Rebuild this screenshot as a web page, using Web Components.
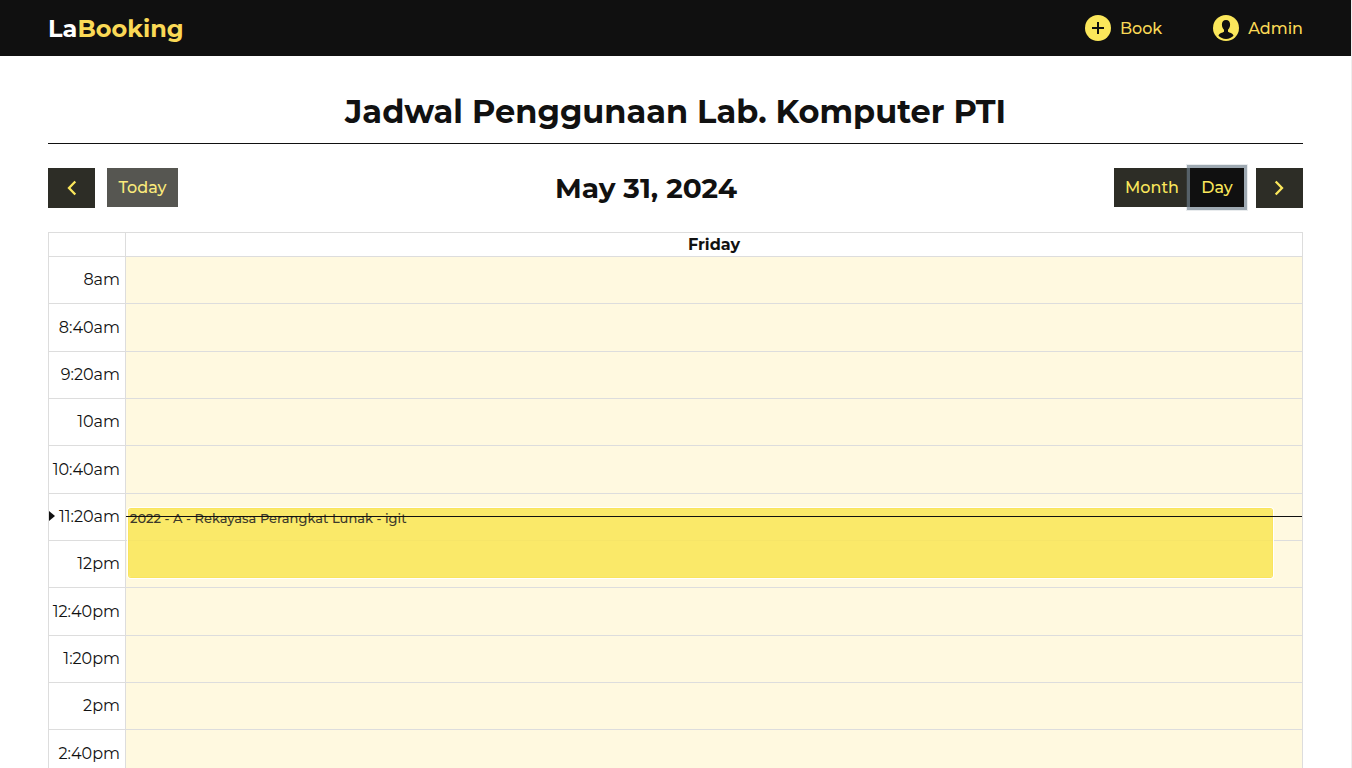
<!DOCTYPE html>
<html lang="id">
<head>
<meta charset="utf-8">
<meta name="viewport" content="width=device-width, initial-scale=1">
<title>LaBooking</title>
<style>
  html { background: #fff; }
  body {
    margin: 0;
    border-right: 1px solid #eee;
    font-family: Montserrat, Inter, "Open Sans", sans-serif;
    font-size: 16px;
    line-height: 24px;
    color: #111;
    --ink: #101010;
    --button: #2d2d26;
    --yellow: #fbe75b;
    --gold: #fad956;
    --line: #ddd;
  }
</style>
</head>
<body>
<booking-app></booking-app>
<script>
const define = (name, markup, setup) => {
  const template = document.createElement('template');
  template.innerHTML = markup;
  customElements.define(name, class extends HTMLElement {
    constructor() {
      super();
      this.attachShadow({ mode: 'open' }).append(template.content.cloneNode(true));
    }
    connectedCallback() { if (setup) setup(this, this.shadowRoot); }
  });
};

define('nav-link', `
  <style>
    :host { display: block; }
    a { display: flex; align-items: center; gap: 9px; color: var(--gold); text-decoration: none; font-weight: 500; }
    .label { padding-top: 2px; }
    ::slotted(svg) { display: block; width: 26px; height: 26px; }
  </style>
  <a href="#"><slot name="icon"></slot><span class="label"><slot></slot></span></a>`,
  (host, root) => { root.querySelector('a').href = host.getAttribute('href'); });

define('site-header', `
  <style>
    :host { display: block; background: var(--ink); }
    header { display: flex; align-items: center; justify-content: space-between; height: 56px; padding: 0 48px; }
    .brand { padding-top: 2px; color: #fff; font-size: 24px; font-weight: 700; text-decoration: none; }
    .brand span { color: var(--gold); }
    nav { display: flex; gap: 51px; }
  </style>
  <header>
    <a class="brand" href="#home">La<span>Booking</span></a>
    <nav>
      <nav-link href="#book">
        <svg slot="icon" viewBox="0 0 26 26" aria-hidden="true">
          <circle cx="13" cy="13" r="13" fill="#fbe75b"/>
          <path d="M13 7v12M7 13h12" stroke="#101010" stroke-width="2"/>
        </svg>Book</nav-link>
      <nav-link href="#admin">
        <svg slot="icon" viewBox="0 0 26 26" aria-hidden="true">
          <circle cx="13" cy="13" r="13" fill="#fbe75b"/>
          <path d="M13 5c-2.700 0-4.100 1.900-4.100 4.500 0 2.400.9 4.200 2.100 5.200v2.100c-1.300 1-4.800 1.200-5.500 4C7.300 22.800 10 24 13 24s5.700-1.200 7.500-3.200c-.7-2.800-4.200-3-5.500-4v-2.100c1.200-1 2.100-2.800 2.100-5.200C17.100 6.900 15.700 5 13 5z" fill="#101010"/>
        </svg>Admin</nav-link>
    </nav>
  </header>`);

define('calendar-toolbar', `
  <style>
    :host { display: block; }
    .bar { display: flex; align-items: flex-start; justify-content: space-between; height: 40px; }
    .side { display: flex; align-items: flex-start; gap: 12px; }
    .views { display: flex; }
    button {
      box-sizing: border-box; display: flex; align-items: center; justify-content: center;
      height: 39px; margin: 0; padding: 0; border: 0; border-radius: 0;
      background: var(--button); color: var(--yellow); font: inherit; font-weight: 500;
    }
    .step { width: 47px; height: 40px; }
    .today { width: 71px; }
    .today:disabled { opacity: .8; }
    .month { width: 76px; }
    .day { width: 54px; position: relative; background: var(--ink); box-shadow: 0 0 0 3px rgba(108, 125, 138, .6), 0 0 0 4px rgba(108, 125, 138, .15); }
    h2 { margin: 0; font-size: 28px; line-height: 40px; font-weight: 700; }
    svg { display: block; width: 16px; height: 16px; fill: none; stroke: currentColor; stroke-width: 2.3; }
  </style>
  <div class="bar">
    <div class="side">
      <button class="step" type="button" aria-label="Previous"><svg viewBox="0 0 16 16"><path d="M11.300 1.500 5 8l6.300 6.500"/></svg></button>
      <button class="today" type="button" disabled>Today</button>
    </div>
    <h2><slot></slot></h2>
    <div class="side">
      <div class="views">
        <button class="month" type="button">Month</button>
        <button class="day" type="button" aria-pressed="true">Day</button>
      </div>
      <button class="step" type="button" aria-label="Next"><svg viewBox="0 0 16 16"><path d="M4.700 1.500 11 8l-6.300 6.500"/></svg></button>
    </div>
  </div>`);

define('calendar-event', `
  <style>
    :host {
      box-sizing: border-box; display: block; padding: 0 1px;
      border: 1px solid rgba(250, 225, 80, .9); border-radius: 3px;
      background: rgba(249, 230, 88, .88); background-clip: padding-box;
      box-shadow: 0 0 0 1px #fff; color: #3d3a2b;
      font-size: 13px; line-height: 18px; font-weight: 500;
    }
  </style>
  <slot></slot>`);

define('day-grid', `
  <style>
    :host { display: block; }
    table { width: 100%; border-collapse: collapse; table-layout: fixed; }
    th, td { box-sizing: border-box; padding: 0; border: 1px solid var(--line); }
    .axis { width: 77px; }
    thead tr { height: 24px; }
    thead td { background: none; }
    thead th { font-weight: 700; line-height: 23px; }
    tbody tr { height: 47px; }
    /* Three 40-minute slots span 142px. */
    tbody tr:nth-child(3n + 2) { height: 48px; }
    tbody th { position: relative; padding-right: 5px; font-weight: 400; text-align: right; white-space: nowrap; }
    tbody td { position: relative; background: #fff9e0; }
    calendar-event { position: absolute; z-index: 1; top: 14px; left: 2px; right: 29px; height: 70px; }
    .now { position: absolute; z-index: 2; top: 22px; left: 0; right: 0; height: 1px; background: #111; }
    .arrow { position: absolute; top: 17px; left: 0; border: solid transparent; border-width: 5px 0 5px 6px; border-left-color: #111; }
  </style>
  <table>
    <colgroup><col class="axis"><col></colgroup>
    <thead><tr><td></td><th scope="col">Friday</th></tr></thead>
    <tbody></tbody>
  </table>`,
  (host, root) => {
    const slots = ['8am', '8:40am', '9:20am', '10am', '10:40am', '11:20am', '12pm', '12:40pm', '1:20pm', '2pm', '2:40pm'];
    root.querySelector('tbody').innerHTML = slots.map(time => {
      const current = time === '11:20am';
      return `<tr><th scope="row">${current ? '<span class="arrow"></span>' : ''}${time}</th><td>${current
        ? '<calendar-event>2022 - A - Rekayasa Perangkat Lunak - igit</calendar-event><span class="now"></span>' : ''}</td></tr>`;
    }).join('');
  });

define('booking-app', `
  <style>
    :host { display: flex; flex-direction: column; height: 100vh; }
    main { flex: 1; min-height: 0; overflow-y: auto; scrollbar-width: none; padding: 24px 48px 0; }
    h1 { margin: 0 0 24px; border-bottom: 1px solid #111; font-size: 32px; line-height: 63px; font-weight: 700; text-align: center; }
    calendar-toolbar { margin-bottom: 24px; }
  </style>
  <site-header></site-header>
  <main>
    <h1>Jadwal Penggunaan Lab. Komputer PTI</h1>
    <calendar-toolbar>May 31, 2024</calendar-toolbar>
    <day-grid></day-grid>
  </main>`);
</script>
</body>
</html>
